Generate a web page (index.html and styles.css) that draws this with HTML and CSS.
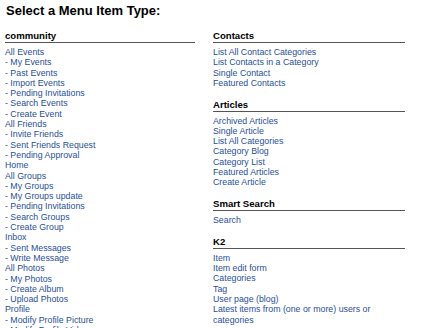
FILE: index.html
```html
<!DOCTYPE html>
<html lang="en">
  <head>
    <meta charset="UTF-8" />
    <meta name="viewport" content="width=device-width, initial-scale=1.0" />
    <title>Select a Menu Item Type</title>
    <link rel="stylesheet" href="styles.css">
  </head>
  <body>
    <h1 class="page-title">Select a Menu Item Type:</h1>

    <div class="columns">
      <!-- left column -->
      <div class="column">
        <div class="menu-group">
          <h3>community</h3>
          <ul>
            <li><a href="#">All Events</a></li>
            <li><a href="#">- My Events</a></li>
            <li><a href="#">- Past Events</a></li>
            <li><a href="#">- Import Events</a></li>
            <li><a href="#">- Pending Invitations</a></li>
            <li><a href="#">- Search Events</a></li>
            <li><a href="#">- Create Event</a></li>
            <li><a href="#">All Friends</a></li>
            <li><a href="#">- Invite Friends</a></li>
            <li><a href="#">- Sent Friends Request</a></li>
            <li><a href="#">- Pending Approval</a></li>
            <li><a href="#">Home</a></li>
            <li><a href="#">All Groups</a></li>
            <li><a href="#">- My Groups</a></li>
            <li><a href="#">- My Groups update</a></li>
            <li><a href="#">- Pending Invitations</a></li>
            <li><a href="#">- Search Groups</a></li>
            <li><a href="#">- Create Group</a></li>
            <li><a href="#">Inbox</a></li>
            <li><a href="#">- Sent Messages</a></li>
            <li><a href="#">- Write Message</a></li>
            <li><a href="#">All Photos</a></li>
            <li><a href="#">- My Photos</a></li>
            <li><a href="#">- Create Album</a></li>
            <li><a href="#">- Upload Photos</a></li>
            <li><a href="#">Profile</a></li>
            <li><a href="#">- Modify Profile Picture</a></li>
            <li><a href="#">- Modify Profile Video</a></li>
          </ul>
        </div>
      </div>

      <!-- right column -->
      <div class="column">
        <div class="menu-group">
          <h3>Contacts</h3>
          <ul>
            <li><a href="#">List All Contact Categories</a></li>
            <li><a href="#">List Contacts in a Category</a></li>
            <li><a href="#">Single Contact</a></li>
            <li><a href="#">Featured Contacts</a></li>
          </ul>
        </div>

        <div class="menu-group">
          <h3>Articles</h3>
          <ul>
            <li><a href="#">Archived Articles</a></li>
            <li><a href="#">Single Article</a></li>
            <li><a href="#">List All Categories</a></li>
            <li><a href="#">Category Blog</a></li>
            <li><a href="#">Category List</a></li>
            <li><a href="#">Featured Articles</a></li>
            <li><a href="#">Create Article</a></li>
          </ul>
        </div>

        <div class="menu-group">
          <h3>Smart Search</h3>
          <ul>
            <li><a href="#">Search</a></li>
          </ul>
        </div>

        <div class="menu-group">
          <h3>K2</h3>
          <ul>
            <li><a href="#">Item</a></li>
            <li><a href="#">Item edit form</a></li>
            <li><a href="#">Categories</a></li>
            <li><a href="#">Tag</a></li>
            <li><a href="#">User page (blog)</a></li>
            <li><a href="#">Latest items from (one or more) users or categories</a></li>
          </ul>
        </div>
      </div>
    </div>
  </body>
</html>
```

FILE: styles.css
```css
/* page */
html,
body {
  height: 100%;
}

body {
  font-family: "Liberation Sans", Arial, sans-serif;
  margin: 0;
  padding: 3px 5px 0;
  background: #fff;
  color: #000;
  overflow: hidden;
  box-sizing: border-box;
}

.page-title {
  font-size: 13px;
  line-height: 15px;
  font-weight: bold;
  margin: 0 0 12px 1px;
}

/* two columns */
.columns {
  display: grid;
  grid-template-columns: 190px 192px;
  column-gap: 18px;
  align-items: start;
}

.menu-group {
  margin-bottom: 10.4px;
}

.menu-group h3 {
  font-size: 9.6px;
  line-height: 11px;
  font-weight: bold;
  margin: 0 0 4px;
  padding-bottom: 1px;
  border-bottom: 1px solid #555;
}

.menu-group ul {
  list-style: none;
  margin: 0;
  padding: 0;
  font-size: 8.8px;
  line-height: 10.3px;
}

.menu-group a {
  color: #1f4f99;
  text-decoration: none;
}
```
